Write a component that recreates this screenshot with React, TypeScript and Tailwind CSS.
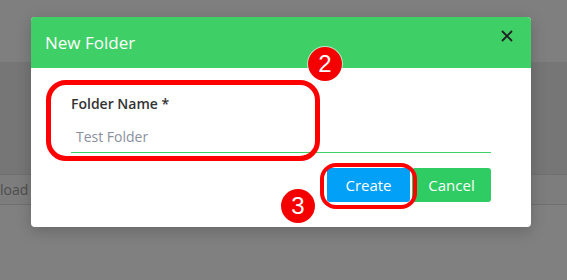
import React from "react";

function Badge({ n, className }: { n: string; className: string }) {
  return (
    <div
      className={`absolute flex h-[34px] w-[34px] items-center justify-center rounded-full bg-[#f50000] text-[24px] leading-none text-white ring-1 ring-white/60 font-['Liberation_Sans',sans-serif] ${className}`}
    >
      {n}
    </div>
  );
}

export default function App() {
  return (
    <div className="relative h-[280px] w-[567px] overflow-hidden bg-[#808080] font-['Open_Sans',sans-serif]">
      {/* page behind the overlay */}
      <div className="h-[62px] bg-[#7f7f7f]" />
      <div className="h-[112px] bg-[#767676]" />
      <div className="flex h-[31px] items-center border-y border-[#707070] bg-[#7d7d7d] text-[14px] text-[#4d4d4d]">
        <span>load</span>
      </div>

      {/* modal */}
      <div className="absolute left-[31px] top-[17px] w-[500px] overflow-hidden rounded-[4px] bg-white shadow-[0_4px_16px_rgba(0,0,0,0.2)]">
        <div className="flex h-[51px] justify-between bg-[#3ecf66] pl-[14px] pr-[18px]">
          <span className="self-center text-[17px] font-medium text-white">New Folder</span>
          <svg width="12" height="12" viewBox="0 0 12 12" className="mt-[13px]">
            <path d="M1 1 L11 11 M11 1 L1 11" stroke="#1f1f1f" strokeWidth="1.8" />
          </svg>
        </div>

        <div className="px-[40px] pb-[25px] pt-[25px]">
          <label className="block text-[14px] font-semibold text-[#333]">Folder Name *</label>
          <div className="mt-[7px] flex h-[32px] items-center border-b border-[#3ecf66] pl-[5px] text-[14px] text-[#8a8f9e]">
            Test Folder
          </div>
          <div className="mt-[15px] flex justify-end gap-[2px]">
            <button className="h-[34px] w-[83px] rounded-[3px] bg-[#03a0f7] text-[15px] font-medium text-white">
              Create
            </button>
            <button className="h-[34px] w-[79px] rounded-[3px] bg-[#2ecc62] text-[15px] font-medium text-white">
              Cancel
            </button>
          </div>
        </div>
      </div>

      {/* annotations */}
      <div className="absolute left-[46px] top-[80px] h-[81px] w-[274px] rounded-[20px] border-[5px] border-[#ff0000]" />
      <div className="absolute left-[320px] top-[163px] h-[46px] w-[97px] rounded-[16px] border-[4px] border-[#ff0000]" />
      <Badge n="2" className="left-[308px] top-[47px]" />
      <Badge n="3" className="left-[281px] top-[189px]" />
    </div>
  );
}
